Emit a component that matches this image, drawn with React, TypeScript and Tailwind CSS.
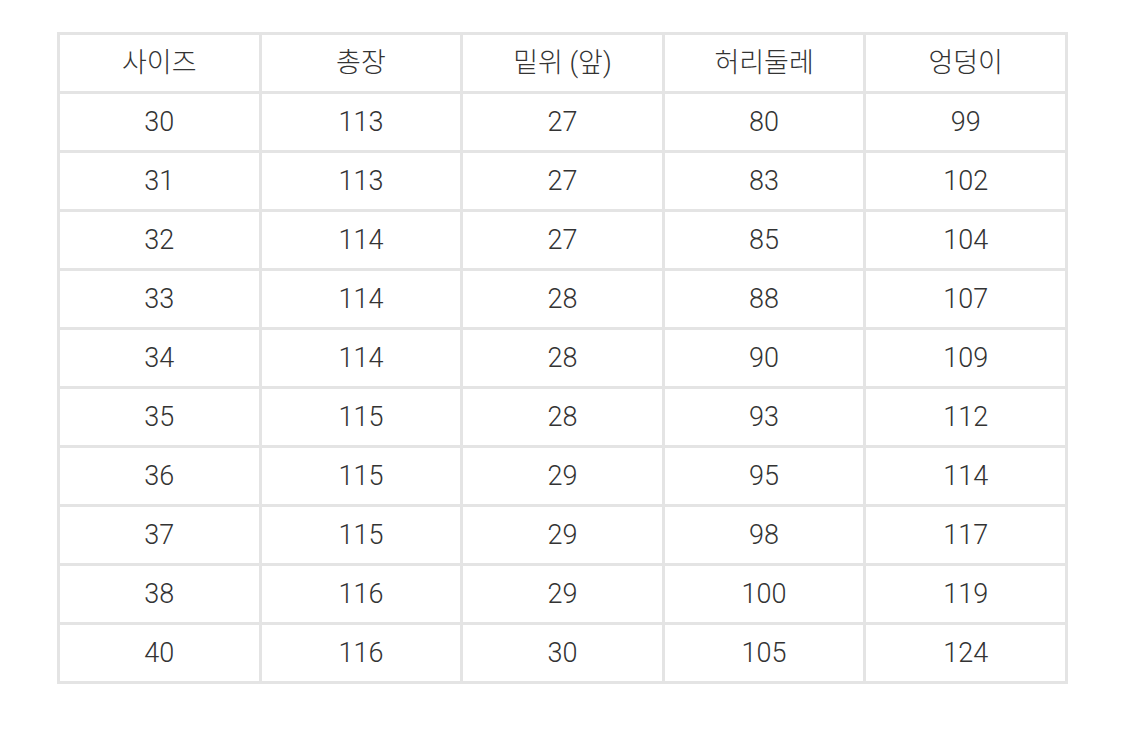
const HEAD = ["사이즈", "총장", "밑위 (앞)", "허리둘레", "엉덩이"];

const ROWS = [
  [30, 113, 27, 80, 99],
  [31, 113, 27, 83, 102],
  [32, 114, 27, 85, 104],
  [33, 114, 28, 88, 107],
  [34, 114, 28, 90, 109],
  [35, 115, 28, 93, 112],
  [36, 115, 29, 95, 114],
  [37, 115, 29, 98, 117],
  [38, 116, 29, 100, 119],
  [40, 116, 30, 105, 124],
];

export default function App() {
  return (
    <div
      className="min-h-[731px] w-[1125px] bg-white pl-[57px] pt-[32px] text-[#333]"
      style={{ fontFamily: 'Roboto, "Noto Sans CJK KR", sans-serif' }}
    >
      <table className="w-[1011px] border-collapse text-center text-[27px] font-light">
        <thead>
          <tr className="h-[59px]">
            {HEAD.map((h) => (
              <th key={h} className="border-[3px] border-[#e4e4e4] font-light">
                {h}
              </th>
            ))}
          </tr>
        </thead>
        <tbody>
          {ROWS.map((r) => (
            <tr key={r[0]} className="h-[59px]">
              {r.map((v, i) => (
                <td key={i} className="w-1/5 border-[3px] border-[#e4e4e4]">
                  {v}
                </td>
              ))}
            </tr>
          ))}
        </tbody>
      </table>
    </div>
  );
}
